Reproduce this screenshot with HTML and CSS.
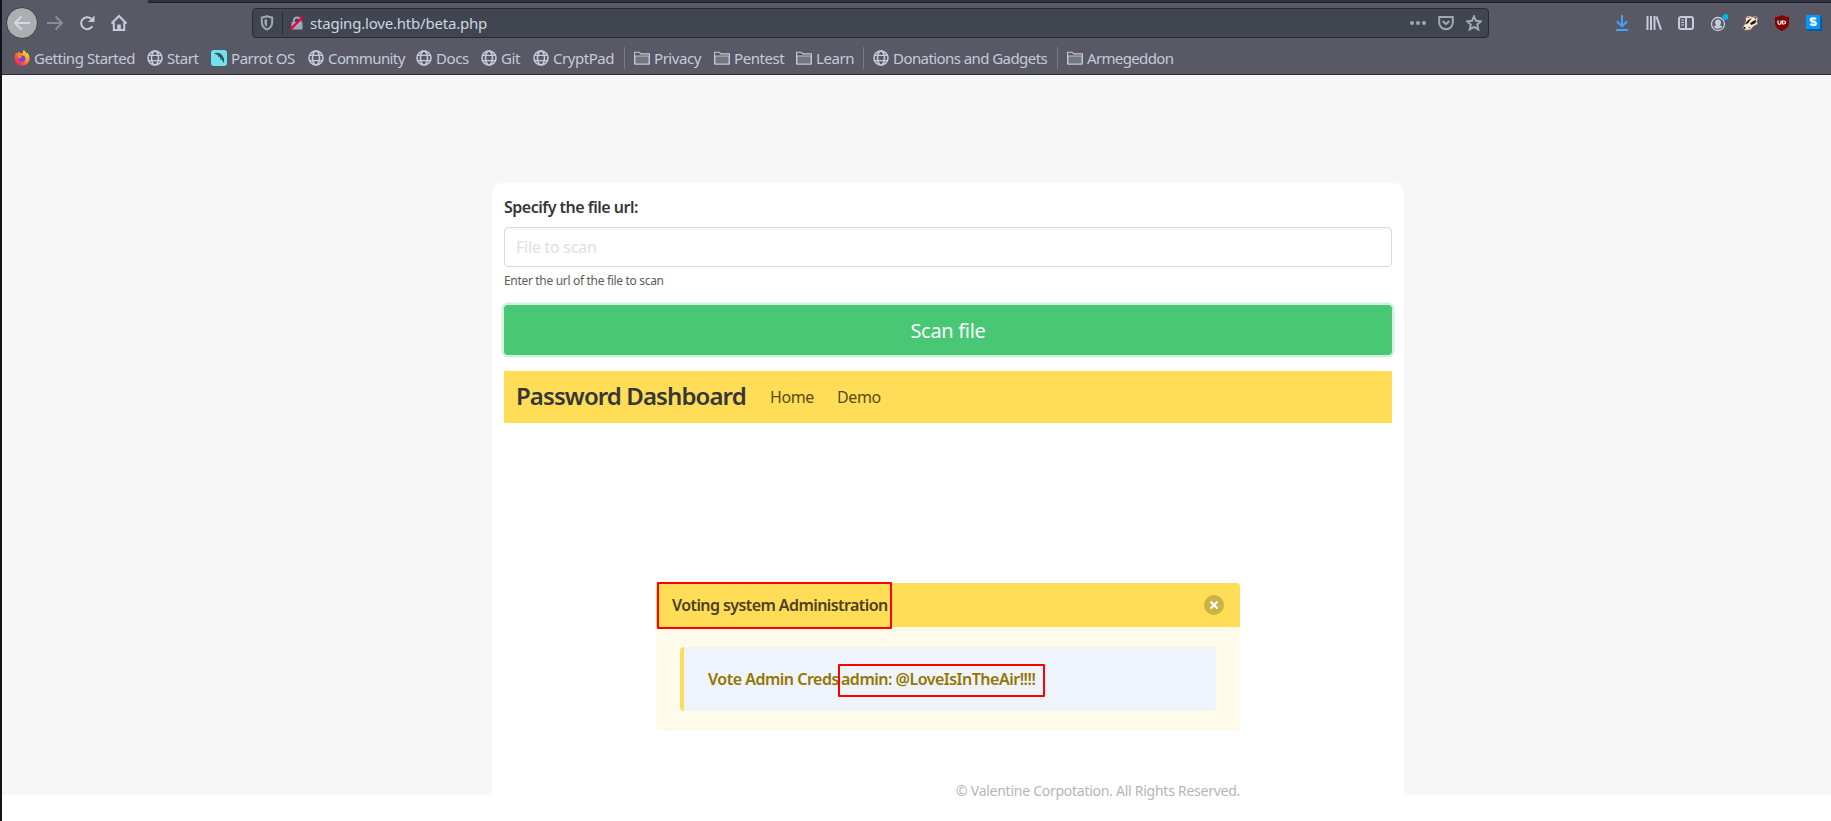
FILE: index.html
```html
<!DOCTYPE html>
<html lang="en">
<head>
<meta charset="utf-8">
<title>staging.love.htb/beta.php</title>
<link rel="stylesheet" href="styles.css">
</head>
<body>
<svg class="defs" width="0" height="0">
  <symbol id="globe" viewBox="0 0 16 16"><g fill="none" stroke="currentColor" stroke-width="1.6"><circle cx="8" cy="8" r="7"/><ellipse cx="8" cy="8" rx="3.5" ry="7"/><path d="M1.5 5.3h13M1.5 10.7h13" stroke-width="1.3"/></g></symbol>
  <symbol id="folder" viewBox="0 0 16 16"><path d="M.6 14V2.2h4.600l1.600 1.700h8.600V14z" fill="none" stroke="currentColor" stroke-width="1.1"/><path d="M1 6h14v8H1z" fill="#72767f" stroke="currentColor" stroke-width=".9"/></symbol>
</svg>
<div class="window">
  <div class="tabstrip"><div class="tab"></div></div>
  <div class="toolbar">
    <div class="nav">
      <span class="back"><svg width="18" height="18" viewBox="0 0 18 18"><path d="M17 9H2M8.500 2.500 2 9l6.500 6.500" class="line"/></svg></span>
      <svg class="forward" width="18" height="18" viewBox="0 0 18 18"><path d="M1 9h15M9.500 2.500 16 9l-6.500 6.500" class="line"/></svg>
      <svg class="reload" width="16" height="16" viewBox="0 0 16 16"><path d="M13.300 11.200A6 6 0 1 1 12.300 3.800" class="line"/><path d="M15.500.500v6.500H9z" fill="currentColor"/></svg>
      <svg class="home" width="18" height="18" viewBox="0 0 18 18"><path d="M1.500 9.500 9 2l7.500 7.500M3.800 8.500V16h10.400V8.500" class="line"/><path d="M7.200 16v-5.500h3.600V16z" fill="currentColor"/></svg>
    </div>
    <div class="urlbar">
      <svg class="shield" width="14" height="16" viewBox="0 0 14 16"><path d="M7 1.200c2 .8 3.500 1.100 5.200 1.200V7c0 4-2 6.200-5.200 7.600C3.800 13.200 1.800 11 1.800 7V2.400C3.500 2.300 5 2 7 1.200z" class="line"/><path d="M7 4v7.800C5 10.600 4.400 9 4.400 7V4.700z" fill="currentColor"/></svg>
      <span class="bar"></span>
      <svg class="lock" width="16" height="16" viewBox="0 0 16 16"><path d="M4.800 8V5a3.400 3.400 0 0 1 6.600 0v3" class="line"/><rect x="2.500" y="7" width="11" height="7.500" rx="1" fill="currentColor"/><path d="M1.500 14.500 14 1.500" stroke="#e80041" stroke-width="2.200"/></svg>
      <span class="url">staging.love.htb/beta.php</span>
      <span class="actions">
        <svg width="16" height="16" viewBox="0 0 16 16"><g fill="currentColor"><circle cx="2" cy="8" r="2"/><circle cx="8" cy="8" r="2"/><circle cx="14" cy="8" r="2"/></g></svg>
        <svg width="16" height="16" viewBox="0 0 16 16"><path d="M1.200 2h13.600v5.500a6.800 6.800 0 0 1-13.600 0zM4.700 6 8 9.200 11.300 6" class="line"/></svg>
        <svg width="16" height="16" viewBox="0 0 16 16"><path d="m8 1.300 2 4.500 4.900.5-3.700 3.300 1.100 4.900L8 12l-4.300 2.500 1.100-4.900L1.100 6.300 6 5.800z" class="line"/></svg>
      </span>
    </div>
    <div class="tools">
      <svg width="16" height="16" viewBox="0 0 16 16"><path d="M8 0v11M2.800 6.200 8 11.400l5.200-5.200M2 15h12" fill="none" stroke="#45a1ff" stroke-width="2"/></svg>
      <svg width="16" height="16" viewBox="0 0 16 16"><path d="M1.500 1v14M5 1v14M8.500 1v14M10.500 1.500 15 14.800" class="line"/></svg>
      <svg width="16" height="16" viewBox="0 0 16 16"><rect x="1" y="2" width="14" height="12" rx="2" class="line"/><path d="M8 2v12" class="line"/><path d="M3 5h3M3 7.500h3M3 10h3" stroke="currentColor"/></svg>
      <svg class="account" width="18" height="18" viewBox="0 0 18 18"><circle cx="8" cy="10" r="6.500" fill="none" stroke="currentColor" stroke-width="1.300"/><circle cx="8" cy="8.500" r="3" fill="currentColor"/><path d="M3.800 12.500c2-2 6.400-2 8.400 0-1.500 3-6.900 3-8.400 0z" fill="currentColor"/><circle cx="15.500" cy="3" r="3" fill="#00b3f4"/></svg>
      <svg width="16" height="16" viewBox="0 0 16 16"><path d="M4 2.500 6.500 1l4 1.200L14 1.500 15.500 3l-.8 3.500.8 2.500-4 2-3 3.500-5 .5-3-2L3 9l1-3z" fill="#f7e6d3" stroke="#e0a069" stroke-width=".5"/><path d="M3 9.500c1.500-3.500 4-5.500 7-6.500-2 2-3 3.500-3.500 5zM8 8.500c1.500-1.500 3.500-3 6-3.500l-.5 3-4 2zM12 2.500l2.500-.2-.8 2zM5 2.500l1.500-.8 1 1zM.8 12.500l2-.8 1 1.600-1.600.8z" fill="#151515"/><path d="m6 12.800 3-1.300-1.500 2z" fill="#555"/></svg>
      <svg width="16" height="16" viewBox="0 0 16 16"><path d="M8 0c2 1.300 4.500 2 7 2v6c0 4-3 6.200-7 8-4-1.800-7-4-7-8V2c2.500 0 5-.7 7-2z" fill="#800000"/><path d="M4 5.500v2.300c0 2 3 2 3 0V5.500M8.500 6v3h1c2.800 0 2.800-3 0-3z" fill="none" stroke="#fff" stroke-width="1.200"/></svg>
      <svg width="16" height="16" viewBox="0 0 16 16"><path d="m14 0 2 2v14H3l-3-2z" fill="#005e9f"/><path d="M0 0h14v14H0z" fill="#0a95ff"/><path d="M10 4.200C8.500 3 4.800 2.800 4.800 4.900c0 2.300 5 1.200 5 3.500 0 2-3.800 1.800-5.500.5" fill="none" stroke="#fff" stroke-width="2.200"/></svg>
    </div>
  </div>
  <div class="bookmarks">
    <span class="mark m1"><svg width="16" height="16" viewBox="0 0 16 16"><defs><linearGradient id="ff" x1="1" y1="0" x2="0" y2="1"><stop offset="0" stop-color="#fff44f"/><stop offset=".4" stop-color="#ff9a20"/><stop offset=".75" stop-color="#ff3750"/><stop offset="1" stop-color="#e5178a"/></linearGradient></defs><path d="M9.500 0c2 1 2.600 2.300 3 3.500l1-.8c1.200 1.500 2 3.300 2 5.500a7.500 7.500 0 0 1-15 0C.5 5.800 1.300 4 2.500 2.500L3.300 4 5 1.500l1 2L8.500 3z" fill="url(#ff)"/><circle cx="8" cy="8.700" r="3.300" fill="#7542e5"/><path d="M4 6.500c1.500-1 3-.5 4 .3L5.500 8.500z" fill="#ff9a20"/></svg><span>Getting Started</span></span>
    <span class="mark m2"><svg width="16" height="16"><use href="#globe"/></svg><span>Start</span></span>
    <span class="mark m3"><svg width="16" height="16" viewBox="0 0 16 16"><rect width="16" height="16" rx="3" fill="#6fe3f2"/><path d="M3 3.500c2-1.500 6-1 8 1.500s2.500 5 1.800 8L10.500 9l-.7 1.300L8.800 6.500 7.600 7.300 6.600 5z" fill="#32525e"/></svg><span>Parrot OS</span></span>
    <span class="mark m4"><svg width="16" height="16"><use href="#globe"/></svg><span>Community</span></span>
    <span class="mark m5"><svg width="16" height="16"><use href="#globe"/></svg><span>Docs</span></span>
    <span class="mark m6"><svg width="16" height="16"><use href="#globe"/></svg><span>Git</span></span>
    <span class="mark m7"><svg width="16" height="16"><use href="#globe"/></svg><span>CryptPad</span></span>
    <span class="mark m8 sep"><svg width="16" height="16"><use href="#folder"/></svg><span>Privacy</span></span>
    <span class="mark m9"><svg width="16" height="16"><use href="#folder"/></svg><span>Pentest</span></span>
    <span class="mark m10"><svg width="16" height="16"><use href="#folder"/></svg><span>Learn</span></span>
    <span class="mark m11 sep"><svg width="16" height="16"><use href="#globe"/></svg><span>Donations and Gadgets</span></span>
    <span class="mark m12 sep"><svg width="16" height="16"><use href="#folder"/></svg><span>Armegeddon</span></span>
  </div>
  <main class="page">
    <section class="card">
      <label class="label" for="file"><span>Specify the file url:</span></label>
      <input class="input" id="file" type="text" placeholder="File to scan">
      <p class="help"><span>Enter the url of the file to scan</span></p>
      <button class="scan"><span>Scan file</span></button>
      <nav class="navbar">
        <span class="brand">Password Dashboard</span>
        <span class="link">Home</span>
        <span class="link demo">Demo</span>
      </nav>
      <article class="message">
        <header class="message-head">
          <span class="title">Voting system Administration</span>
          <span class="close"><svg width="20" height="20" viewBox="0 0 20 20"><path d="m6.500 6.500 7 7M13.500 6.500l-7 7" stroke="#fff" stroke-width="2.200"/></svg></span>
          <i class="mark-title"></i>
        </header>
        <div class="message-body">
          <div class="creds"><span class="vote">Vote Admin Creds</span><span class="secret">admin: @LoveIsInTheAir!!!!</span><i class="mark-creds"></i></div>
        </div>
      </article>
      <footer class="footer"><span>© Valentine Corpotation. All Rights Reserved.</span></footer>
    </section>
  </main>
</div>
</body>
</html>
```
FILE: styles.css
```css
* { box-sizing: border-box; }
body { margin: 0; background: #fff; font-family: "Noto Sans", sans-serif; overflow: hidden; }
.defs { position: absolute; }
.line { fill: none; stroke: currentColor; stroke-width: 2; }
svg { flex: none; display: block; }
.window { height: 821px; border-left: 2px solid #11141d; display: flex; flex-direction: column; }
.tabstrip { height: 3px; flex: none; background: #2f323e; border-bottom: 1px solid #1d202b; }
.tab { width: 146px; height: 3px; background: #585965; }
.toolbar { height: 39px; flex: none; background: #585965; display: flex; align-items: flex-start; color: #c5cbd8; }
.nav { width: 250px; height: 40px; display: flex; align-items: center; padding-left: 4px; }
.back { width: 32px; height: 32px; border-radius: 50%; background: #acaeb2; border: 1px solid #3d3e46; display: flex; align-items: center; justify-content: center; color: #d5d8dd; }
.forward { margin-left: 8px; opacity: .45; }
.reload { margin-left: 15px; }
.home { margin-left: 15px; }
.urlbar { width: 1237px; height: 30px; margin-top: 5px; background: #404550; border: 1px solid #272b38; border-radius: 4px; display: flex; align-items: center; color: #a1a7b3; }
.shield { margin-left: 7px; }
.bar { width: 1px; height: 22px; background: #292d38; margin-left: 8px; }
.lock { margin-left: 6px; }
.url { margin-left: 5px; font-size: 15px; line-height: 20px; letter-spacing: -.2px; color: #cfd5e0; }
.actions { margin-left: auto; display: flex; gap: 12px; padding-right: 6px; }
.tools { flex: 1; display: flex; justify-content: space-between; padding: 12px 9px 0 125px; }
.account { margin: -1px -2px 0 0; }
.bookmarks { height: 33px; flex: none; background: #585965; border-bottom: 1px solid #2b2d3a; color: #c5cbd8; font-size: 15px; line-height: 20px; letter-spacing: -.45px; display: flex; padding: 5px 0 0 12px; }
.mark { display: flex; align-items: center; flex: none; height: 22px; gap: 4px; white-space: nowrap; }
.sep::before { content: ""; flex: none; width: 1px; height: 22px; background: #777a84; margin-right: 5px; }
.m1 { width: 133px; } .m2 { width: 64px; } .m3 { width: 97px; } .m4 { width: 108px; }
.m5 { width: 65px; } .m6 { width: 52px; } .m7 { width: 91px; } .m8 { width: 90px; }
.m9 { width: 82px; } .m10 { width: 67px; } .m11 { width: 194px; letter-spacing: -.57px; }
.m4 { letter-spacing: -.6px; }
.m12 { letter-spacing: -.65px; }
.page { height: 720px; flex: none; background: #f7f7f7; padding: 108px 0 0 490px; }
.card { width: 912px; height: 638px; background: #fff; border-radius: 10px; padding: 12px; display: flex; flex-direction: column; }
.label { font-size: 16px; line-height: 24px; font-weight: 600; letter-spacing: -.5px; color: #363636; white-space: nowrap; }
.input { margin-top: 8px; height: 40px; flex: none; border: 1px solid #dbdbdb; border-radius: 4px; padding: 0 11px; font: 16px "Noto Sans", sans-serif; letter-spacing: -.25px; box-shadow: inset 0 1px 2px rgba(10,10,10,.05); }
.input::placeholder { color: #e0e0e0; }
.help { margin: 5px 0 0; font-size: 12px; line-height: 18px; letter-spacing: -.32px; color: #5b5b5b; }
.scan { height: 50px; flex: none; margin-top: 15px; border: 0; border-radius: 4px; background: #48c774; box-shadow: 0 0 0 2.500px #d1f1dc; color: #fff; font: 20px "Noto Sans", sans-serif; letter-spacing: -.3px; }
.navbar { height: 52px; flex: none; margin-top: 16px; background: #ffdd57; display: flex; align-items: center; padding-left: 12px; color: #5a4a18; font-size: 16px; letter-spacing: -.4px; white-space: nowrap; }
.brand { width: 254px; font-size: 24px; line-height: 34px; margin-bottom: 2px; font-weight: 600; letter-spacing: -.9px; color: #363636; }
.link { width: 67px; }
.message { margin: 160px 152px 0 152px; width: 584px; height: 148px; flex: none; border-radius: 4px; background: #fffbeb; color: #947600; font-weight: 600; font-size: 16px; white-space: nowrap; }
.message-head { position: relative; height: 44px; background: #ffdd57; border-radius: 4px 4px 0 0; display: flex; align-items: center; justify-content: space-between; padding: 0 16px; color: #4c4120; letter-spacing: -.58px; }
.close { width: 20px; height: 20px; border-radius: 50%; background: #ccb146; }
.message-body { padding: 20px 24px; }
.creds { position: relative; height: 64px; background: #eef3fc; border-left: 4px solid #ffdd57; border-radius: 4px; display: flex; align-items: center; padding-left: 24px; letter-spacing: -.5px; }
.vote { width: 133px; }
.mark-title, .mark-creds { position: absolute; border: 2px solid #f00; border-radius: 1px; }
.mark-title { left: 1px; top: -1px; width: 235px; height: 47px; }
.mark-creds { left: 154px; top: 17px; width: 207px; height: 33px; }
.footer { margin: 49px 152px 0 0; text-align: right; font-size: 14px; line-height: 21px; letter-spacing: -.26px; color: #b5b5b5; white-space: nowrap; }
```
